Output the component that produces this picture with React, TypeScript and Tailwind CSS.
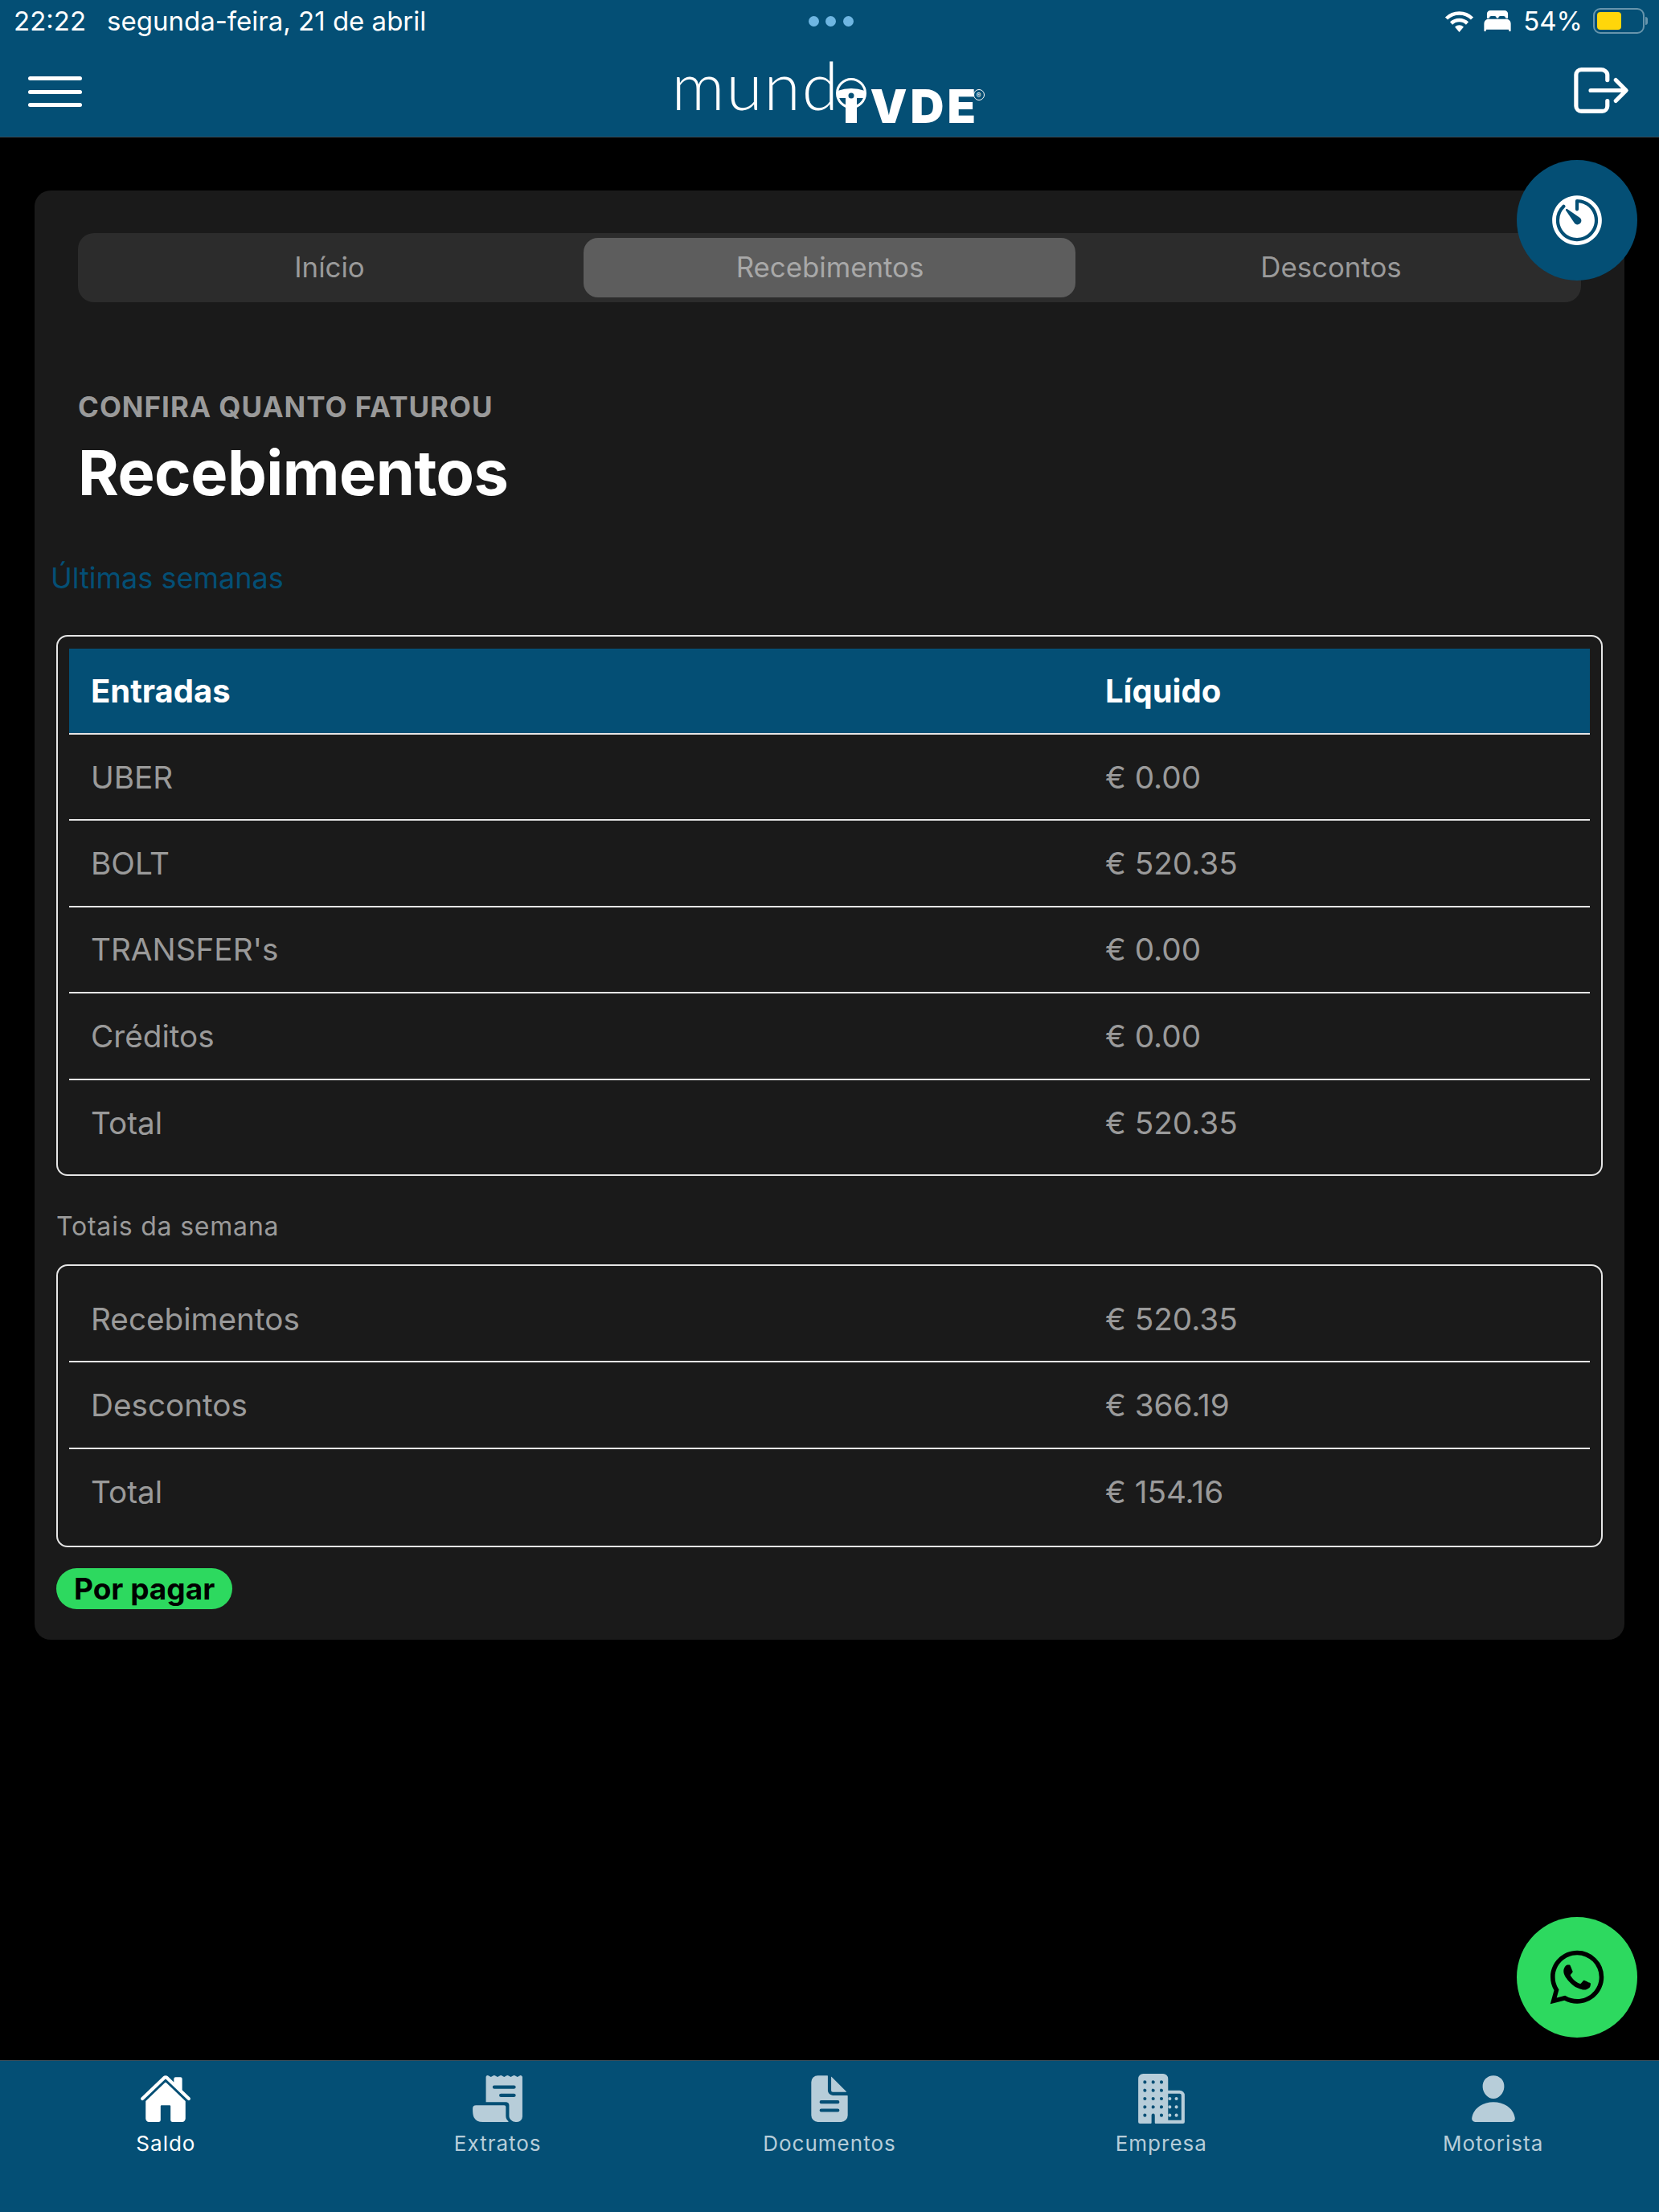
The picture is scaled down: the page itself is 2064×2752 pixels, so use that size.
import { IoBed, IoBusiness, IoDocumentText, IoHome, IoLogOutOutline, IoLogoWhatsapp, IoPerson, IoReceipt, IoTimer } from 'react-icons/io5'
import type { IconType } from 'react-icons'

type Row = { label: string; value: string }

const entradas: Row[] = [
  { label: 'UBER', value: '€ 0.00' },
  { label: 'BOLT', value: '€ 520.35' },
  { label: "TRANSFER's", value: '€ 0.00' },
  { label: 'Créditos', value: '€ 0.00' },
  { label: 'Total', value: '€ 520.35' },
]

const totais: Row[] = [
  { label: 'Recebimentos', value: '€ 520.35' },
  { label: 'Descontos', value: '€ 366.19' },
  { label: 'Total', value: '€ 154.16' },
]

const navItems: { label: string; icon: IconType; active?: boolean }[] = [
  { label: 'Saldo', icon: IoHome, active: true },
  { label: 'Extratos', icon: IoReceipt },
  { label: 'Documentos', icon: IoDocumentText },
  { label: 'Empresa', icon: IoBusiness },
  { label: 'Motorista', icon: IoPerson },
]

function WifiGlyph() {
  return (
    <svg className="h-[27px] w-[37px]" viewBox="0 0 37 27" fill="none" stroke="#fff" strokeWidth="4.5">
      <path d="M2.5 10A23 23 0 0 1 34.500 10" />
      <path d="M8.500 16A14.500 14.500 0 0 1 28.500 16" />
      <path d="M13 20.500A8 8 0 0 1 24 20.500L18.500 27z" fill="#fff" stroke="none" />
    </svg>
  )
}

function StatusBar() {
  return (
    <div className="flex h-[52px] items-center justify-between pl-[17px] pr-[14px] text-[33px] leading-none text-white">
      <div className="flex w-[700px] gap-[26px]">
        <span>22:22</span>
        <span>segunda-feira, 21 de abril</span>
      </div>
      <div className="flex gap-[8.500px]">
        <span className="h-[13px] w-[13px] rounded-full bg-[#6fb6e2]" />
        <span className="h-[13px] w-[13px] rounded-full bg-[#6fb6e2]" />
        <span className="h-[13px] w-[13px] rounded-full bg-[#6fb6e2]" />
      </div>
      <div className="flex w-[700px] items-center justify-end">
        <WifiGlyph />
        <IoBed className="ml-[10px] mr-[13px] h-[38px] w-[38px]" />
        <span className="mr-[13px]">54%</span>
        <div className="flex items-center">
          <div className="h-[32px] w-[64px] rounded-[9px] border-2 border-white/40 p-[3px]">
            <div className="h-full w-[30px] rounded-[4px] bg-[#ffd60a]" />
          </div>
          <div className="ml-[1px] h-[10px] w-[3px] rounded-r bg-white/40" />
        </div>
      </div>
    </div>
  )
}

// wordmark: light "mund", steering wheel as the "o", heavy TVDE
function Logo() {
  return (
    <div className="relative h-[110px] w-[400px]">
      <span className="absolute left-[10px] top-[-6px] font-['Lato'] text-[82px] font-light leading-[110px] tracking-[2px] text-white">mund</span>
      <span className="absolute left-[257px] top-[47px] text-[58px] font-black leading-[58px] tracking-[4px] text-white">VDE</span>
      <svg className="absolute left-[209px] top-[36px] h-[66px] w-[48px]" viewBox="0 0 48 66" fill="none">
        <circle cx="24" cy="24" r="17.500" stroke="#fff" strokeWidth="3" />
        <path d="M7 21Q24 15 41 21L41 30H31V61H17V30H7z" fill="#fff" />
        <circle cx="24" cy="27" r="3.500" fill="#044f75" />
      </svg>
      <span className="absolute left-[385px] top-[55px] flex h-[14px] w-[14px] items-center justify-center rounded-full border border-white text-[9px] leading-none text-white">®</span>
    </div>
  )
}

function Header() {
  return (
    <header className="h-[171px] border-b border-[#3a4a55] bg-[#044f75]">
      <StatusBar />
      <div className="flex h-[118px] items-center justify-between pl-[35px] pr-[29px]">
        <div className="flex w-[67px] flex-col gap-[11.500px] pt-[6px]">
          <span className="h-[5px] rounded-full bg-white" />
          <span className="h-[5px] rounded-full bg-white" />
          <span className="h-[5px] rounded-full bg-white" />
        </div>
        <Logo />
        <IoLogOutOutline className="h-[86px] w-[86px] pt-[3px] text-white" />
      </div>
    </header>
  )
}

function Tabs() {
  return (
    <div className="grid h-[86px] grid-cols-3 items-center gap-[11px] rounded-[20px] bg-[#2c2c2c] px-[6px] pb-[2px] text-center text-[34.800px] text-[#9a9a9a]">
      <span className="pl-[2px]">Início</span>
      <span className="mt-[2px] flex h-[74px] items-center justify-center rounded-[18px] bg-[#5d5d5d] pb-[2px] pl-[1px] text-[#a8a8a8]">Recebimentos</span>
      <span className="pl-[2px]">Descontos</span>
    </div>
  )
}

function TableRows({ rows }: { rows: Row[] }) {
  return (
    <>
      {rows.map((row, i) => (
        <div key={row.label} className={`flex h-[107.400px] items-center text-[38.700px] text-[#9a9a9a] ${i < rows.length - 1 ? 'border-b-2 border-[#e6e6e6]' : ''}`}>
          <span className="w-[1289px] pl-[27px]">{row.label}</span>
          <span>{row.value}</span>
        </div>
      ))}
    </>
  )
}

function BottomNav() {
  return (
    <nav className="grid h-[189px] grid-cols-5 border-t border-[#3a4a55] bg-[#044f75] pt-[14px]">
      {navItems.map(({ label, icon: Icon, active }) => (
        <div key={label} className={`flex flex-col items-center text-[26px] tracking-[1px] ${active ? 'text-white' : 'text-[#b7cdd9]'}`}>
          <Icon className="h-[66px] w-[66px]" />
          <span className="mt-[5px] leading-[36px]">{label}</span>
        </div>
      ))}
    </nav>
  )
}

export default function App() {
  return (
    <div className="relative flex h-[2752px] w-[2064px] flex-col bg-black font-['Inter','Liberation_Sans',sans-serif]">
      <Header />
      <main className="flex-1 px-[43px] pt-[66px]">
        <section className="h-[1803px] rounded-[20px] bg-[#1a1a1a] px-[27px] pt-[53px]">
          <div className="mx-[27px]">
            <Tabs />
            <p className="mt-[110px] text-[35px] font-bold leading-[40px] tracking-[1px] text-[#9a9a9a]">CONFIRA QUANTO FATUROU</p>
            <h1 className="mt-[16px] text-[77.500px] font-bold leading-[92px] tracking-[-0.500px] text-white">Recebimentos</h1>
          </div>
          <p className="ml-[-7px] mt-[63px] text-[36px] leading-[44px] text-[#044f75]">Últimas semanas</p>
          <div className="mt-[49px] rounded-[14px] border-2 border-[#e6e6e6] px-[14px] pb-[10px] pt-[15px]">
            <div className="flex h-[107px] items-center border-b-2 border-[#e6e6e6] bg-[#044f75] text-[40px] font-bold text-white">
              <span className="w-[1289px] pl-[27px]">Entradas</span>
              <span>Líquido</span>
            </div>
            <TableRows rows={entradas} />
          </div>
          <p className="mt-[43px] text-[32px] leading-[40px] tracking-[0.800px] text-[#9a9a9a]">Totais da semana</p>
          <div className="mt-[27px] rounded-[14px] border-2 border-[#e6e6e6] px-[14px] py-[13px]">
            <TableRows rows={totais} />
          </div>
          <span className="mt-[26px] inline-block rounded-full bg-[#2dd95f] px-[22px] text-[37px] font-bold leading-[51px] text-black">Por pagar</span>
        </section>
      </main>
      <BottomNav />
      <button className="absolute left-[1887px] top-[199px] flex h-[150px] w-[150px] items-center justify-center rounded-full bg-[#044f75] text-white">
        <IoTimer className="h-[76px] w-[76px]" />
      </button>
      <button className="absolute left-[1887px] top-[2385px] flex h-[150px] w-[150px] items-center justify-center rounded-full bg-[#2dd95f] text-black">
        <IoLogoWhatsapp className="h-[76px] w-[76px]" />
      </button>
    </div>
  )
}
